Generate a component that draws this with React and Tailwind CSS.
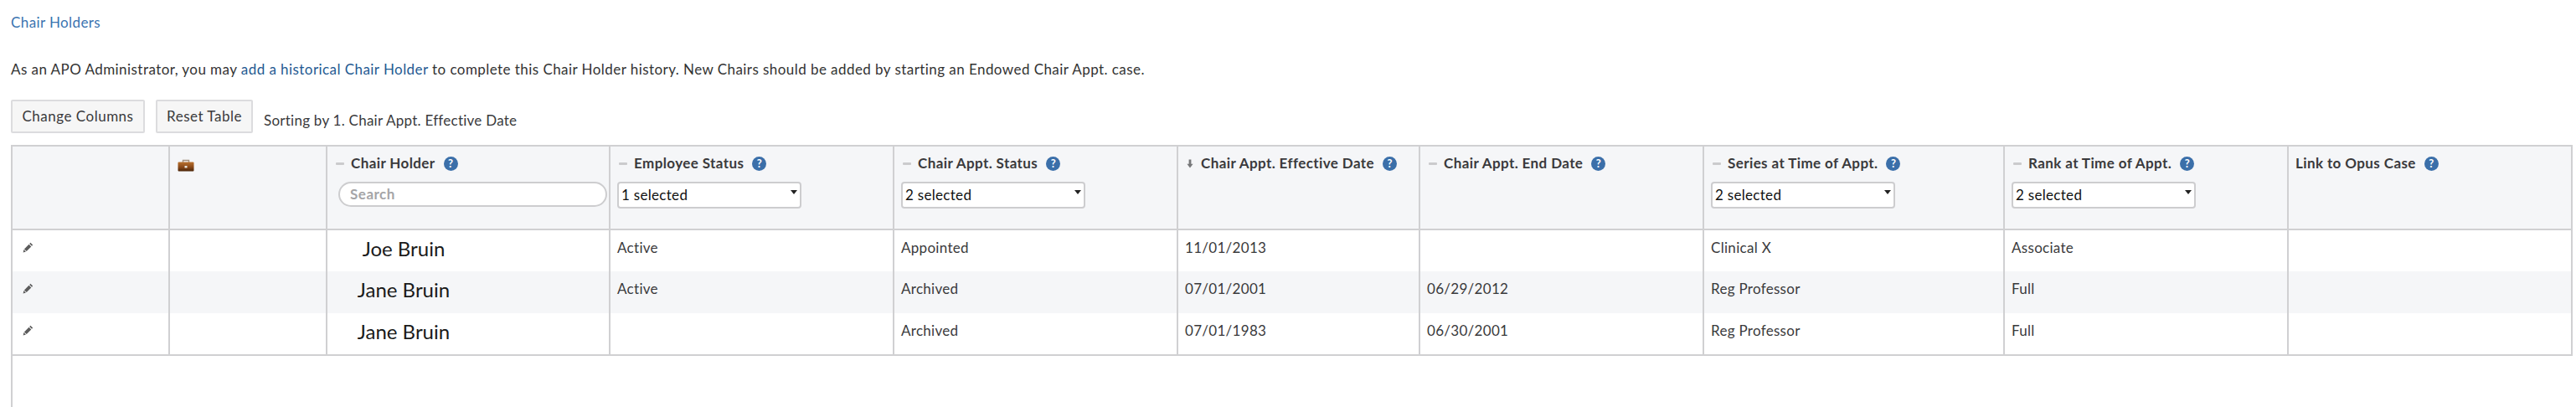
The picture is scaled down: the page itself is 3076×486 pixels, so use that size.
import React from 'react';

const widths = [187, 188, 338, 339, 339, 289, 339, 359, 339, 339];

const rows = [
  { name: 'Joe Bruin', employee: 'Active', status: 'Appointed', start: '11/01/2013', end: '', series: 'Clinical X', rank: 'Associate' },
  { name: 'Jane Bruin', employee: 'Active', status: 'Archived', start: '07/01/2001', end: '06/29/2012', series: 'Reg Professor', rank: 'Full', alt: true },
  { name: 'Jane Bruin', employee: '', status: 'Archived', start: '07/01/1983', end: '06/30/2001', series: 'Reg Professor', rank: 'Full' },
];

const Help = () => (
  <span className="ml-[10px] flex h-[17px] w-[17px] shrink-0 items-center justify-center rounded-full bg-[#3b6fa9] text-[13px] leading-none font-bold tracking-normal text-white">?</span>
);

const Dash = () => <span className="mr-2 h-[3px] w-[10px] shrink-0 rounded-[1px] bg-[#cbcbcd]" />;

const SortDown = () => (
  <svg width="8" height="11" viewBox="0 0 8 11" className="mr-[9px] shrink-0">
    <path d="M2.6 0.5h2.8v5.2h2.2L4 10.5 0.4 5.7h2.2z" fill="#77787a" />
  </svg>
);

const Pencil = () => (
  <svg width="13" height="13" viewBox="0 0 13 13">
    <path d="M9.4 0.8l2.8 2.6-1.2 1.3-2.8-2.6zM7.5 2.8l2.8 2.6-5.6 5.6-2.8-2.6zM1.4 9l2.6 2.5-3.4 1z" fill="#5c5c5c" />
  </svg>
);

const Briefcase = () => (
  <svg width="20" height="15" viewBox="0 0 20 15">
    <defs>
      <linearGradient id="case" x1="0" y1="0" x2="0" y2="1">
        <stop offset="0" stopColor="#b9712f" />
        <stop offset="0.55" stopColor="#8a4a1a" />
        <stop offset="1" stopColor="#4a2408" />
      </linearGradient>
    </defs>
    <path d="M6.5 4V1.5h7V4" fill="none" stroke="#a58f7c" strokeWidth="1.4" />
    <rect x="0.5" y="3.5" width="19" height="11" rx="1" fill="url(#case)" />
    <rect x="8.5" y="8" width="3" height="2.5" fill="#e8e4dc" />
  </svg>
);

const Select = ({ label }) => (
  <div className="mt-3 flex h-8 w-[220px] justify-between rounded-[4px] border-2 border-[#cdcdcf] bg-white pr-[3px] pl-[3px] text-[17px] leading-7 tracking-[0.3px] text-[#111]">
    <span>{label}</span>
    <svg width="8" height="5" viewBox="0 0 8 5" className="mt-2">
      <path d="M0 0h8L4 5z" fill="#222" />
    </svg>
  </div>
);

const Head = ({ title, icon = 'dash', children }) => (
  <th className="border-r-2 border-[#d0d0d2] bg-[#f5f6f8] px-2 pt-[10px] text-left align-top font-normal">
    <div className={`flex h-5 items-center text-[17px] leading-5 font-bold tracking-[0.4px] text-[#3a3a3c] ${icon === 'none' ? '' : 'pl-[2px]'}`}>
      {icon === 'dash' && <Dash />}
      {icon === 'sort' && <SortDown />}
      <span>{title}</span>
      <Help />
    </div>
    {children}
  </th>
);

const Cell = ({ children }) => (
  <td className="border-r-2 border-[#d0d0d2] px-2 pt-[11px] align-top text-[17px] leading-5 tracking-[0.3px] text-[#3a3a3c]">{children}</td>
);

export default function App() {
  return (
    <div className="h-[486px] w-[3076px] overflow-hidden bg-white pl-[13px] font-['Lato','Open_Sans',sans-serif] text-[17px] text-[#333]">
      <div className="pt-[17px] leading-5 tracking-[0.4px]">
        <a className="text-[#3a74b0]">Chair Holders</a>
      </div>
      <p className="mt-9 leading-5 tracking-[0.44px]">
        As an APO Administrator, you may <a className="text-[#1f5a92]">add a historical Chair Holder</a> to complete this Chair Holder history. New Chairs should be added by starting an Endowed Chair Appt. case.
      </p>
      <div className="mt-[26px] flex items-start">
        <button className="h-10 w-40 rounded-[2px] border-2 border-[#dcdcde] bg-[#f6f6f6] tracking-[0.5px] text-[#3a3a3c]">Change Columns</button>
        <button className="ml-[13px] h-10 w-[116px] rounded-[2px] border-2 border-[#dcdcde] bg-[#f6f6f6] tracking-[0.5px] text-[#3a3a3c]">Reset Table</button>
        <span className="mt-[15px] ml-[13px] leading-5 tracking-[0.25px] text-[#3a3a3c]">Sorting by 1. Chair Appt. Effective Date</span>
      </div>
      <div className="mt-[14px] h-[320px] border-l-2 border-[#d0d0d2]">
        <table className="w-[3056px] table-fixed border-y-2 border-[#d0d0d2]">
          <colgroup>
            {widths.map((w, i) => <col key={i} style={{ width: w }} />)}
          </colgroup>
          <thead>
            <tr className="h-[100px] border-b-2 border-[#d0d0d2]">
              <th className="border-r-2 border-[#d0d0d2] bg-[#f5f6f8]" />
              <th className="border-r-2 border-[#d0d0d2] bg-[#f5f6f8] pt-[15px] pl-[9px] text-left align-top">
                <Briefcase />
              </th>
              <Head title="Chair Holder">
                <div className="mt-3 ml-[5px] flex h-[30px] w-[321px] items-center rounded-full border-2 border-[#cdcdcf] bg-white pl-3 text-left font-bold tracking-[0.5px] text-[#a5a5a7]">Search</div>
              </Head>
              <Head title="Employee Status"><Select label="1 selected" /></Head>
              <Head title="Chair Appt. Status"><Select label="2 selected" /></Head>
              <Head title="Chair Appt. Effective Date" icon="sort" />
              <Head title="Chair Appt. End Date" />
              <Head title="Series at Time of Appt."><Select label="2 selected" /></Head>
              <Head title="Rank at Time of Appt."><Select label="2 selected" /></Head>
              <Head title="Link to Opus Case" icon="none" />
            </tr>
          </thead>
          <tbody>
            {rows.map((r, i) => (
              <tr key={i} className={`h-[50px] ${r.alt ? 'bg-[#f5f6f8]' : 'bg-white'}`}>
                <td className="border-r-2 border-[#d0d0d2] pt-[14px] pl-3 align-top"><Pencil /></td>
                <Cell />
                <td className="border-r-2 border-[#d0d0d2] pt-2 align-top">
                  <div className="w-[182px] text-center text-[24px] leading-7 text-[#1a1a1a]">{r.name}</div>
                </td>
                <Cell>{r.employee}</Cell>
                <Cell>{r.status}</Cell>
                <Cell>{r.start}</Cell>
                <Cell>{r.end}</Cell>
                <Cell>{r.series}</Cell>
                <Cell>{r.rank}</Cell>
                <Cell />
              </tr>
            ))}
          </tbody>
        </table>
      </div>
    </div>
  );
}
